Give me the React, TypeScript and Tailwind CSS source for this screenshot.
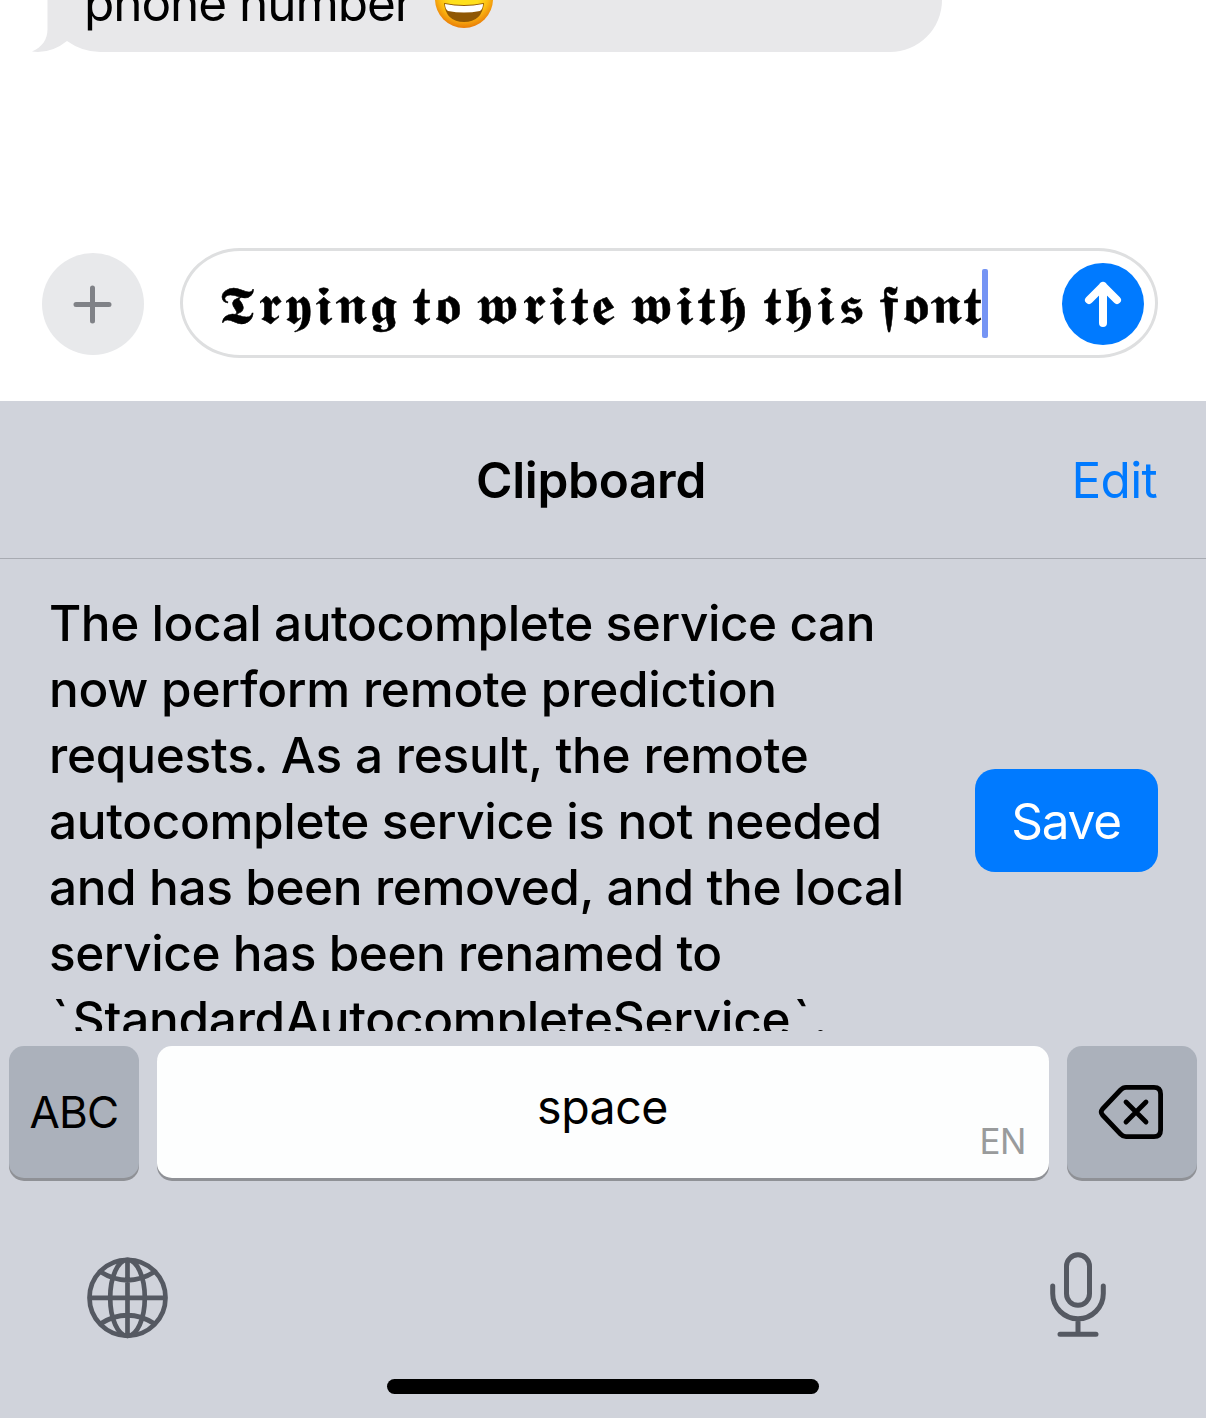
const lines = [
  { text: "The local autocomplete service can", cls: "tracking-[-0.45px]" },
  { text: "now perform remote prediction", cls: "tracking-[-0.26px]" },
  { text: "requests. As a result, the remote", cls: "tracking-[-0.23px]" },
  { text: "autocomplete service is not needed", cls: "tracking-[-0.36px]" },
  { text: "and has been removed, and the local", cls: "tracking-[-0.4px]" },
  { text: "service has been renamed to", cls: "tracking-[-0.46px]" },
];

function Emoji() {
  return (
    <svg className="h-[60px] w-[60px]" viewBox="0 0 60 60">
      <defs>
        <radialGradient id="face" cx="0.5" cy="0.4" r="0.6">
          <stop offset="0.45" stopColor="#ffe01c" />
          <stop offset="0.72" stopColor="#fdbd12" />
          <stop offset="1" stopColor="#e97c08" />
        </radialGradient>
      </defs>
      <circle cx="30" cy="30" r="29" fill="url(#face)" />
      <path d="M10 34 Q30 38 50 34 Q48 53 30 53 Q12 53 10 34Z" fill="#8f5704" />
      <path d="M11 35 Q30 39 49 35 Q49 40 46 42 Q30 45 14 42 Q11 40 11 35Z" fill="#fff" />
    </svg>
  );
}

function Message() {
  return (
    <div className="relative ml-[48px] h-[52px] w-[894px] overflow-visible rounded-br-[53px] bg-[#e8e8ea]">
      <svg className="absolute top-0 -left-[18px] h-[53px] w-[80px]" viewBox="30 0 80 53">
        <rect x="47" y="30" width="60" height="23" fill="#fff" />
        <path d="M47.500 0V29C47.500 40 42 47 32 51.600Q51 54 67 41Q82 51.800 100 52H110V0Z" fill="#e8e8ea" />
      </svg>
      <div className="absolute inset-0 overflow-hidden">
        <div className="-mt-[31px] ml-[36px] flex h-[60px] items-center">
          <span className="mt-[8px] w-[350px] text-[49.5px] leading-[60px] tracking-[-1.05px] whitespace-nowrap">phone number</span>
          <span className="h-[60px] w-[60px] shrink-0"><Emoji /></span>
        </div>
      </div>
    </div>
  );
}

function Composer() {
  return (
    <div className="mt-[196px] flex h-[110px] items-center pr-[48px] pl-[42px]">
      <button className="mt-[2px] flex h-[102px] w-[102px] items-center justify-center rounded-full bg-[#e8e9eb]">
        <svg className="h-[42px] w-[42px]" viewBox="0 0 42 42" stroke="#808287" strokeWidth="5" strokeLinecap="round">
          <path d="M4 21.500H37M20.500 5V38" />
        </svg>
      </button>
      <div className="ml-[36px] flex h-[110px] w-[978px] items-center rounded-[60px/55px] border-[3px] border-[#dedfe0] pt-[2px] pr-[11px] pl-[35px]">
        <div className="w-[764px] shrink-0">
          <span className="mt-[3px] inline-block origin-left scale-x-[1.12] text-[53px] leading-[60px] tracking-[2.900px] [word-spacing:-5px] whitespace-nowrap [-webkit-text-stroke:0.5px_black] [font-family:'Liberation_Serif',serif]">
            𝕿𝖗𝖞𝖎𝖓𝖌 𝖙𝖔 𝖜𝖗𝖎𝖙𝖊 𝖜𝖎𝖙𝖍 𝖙𝖍𝖎𝖘 <span className="-ml-[2px] tracking-[1.900px]">𝖋𝖔𝖓𝖙</span>
          </span>
        </div>
        <span className="-mt-[2px] h-[69px] w-[6px] shrink-0 rounded-[2px] bg-[#7594f4]" />
        <button className="ml-auto flex h-[82px] w-[82px] shrink-0 items-center justify-center rounded-full bg-[#007aff]">
          <svg className="h-[82px] w-[82px]" viewBox="0 0 82 82" fill="none" stroke="#fff" strokeWidth="8" strokeLinecap="round" strokeLinejoin="round">
            <path d="M41 60V23M27 37L41 23L55 37" />
          </svg>
        </button>
      </div>
    </div>
  );
}

const key = "flex h-[132px] items-center justify-center rounded-[15px] shadow-[0_3px_0_#8f9196]";

export default function App() {
  return (
    <div className="flex h-[1418px] w-[1206px] flex-col overflow-hidden bg-white text-black [font-family:Inter,sans-serif]">
      <Message />
      <Composer />
      <div className="mt-[43px] flex flex-1 flex-col bg-[#d0d3db]">
        <header className="grid h-[158px] grid-cols-[1fr_auto_1fr] items-center border-b border-[#a8abb2] pt-[2px] pr-[49px] pl-[25px]">
          <span />
          <h1 className="text-[49.5px] font-semibold tracking-[-0.3px]">Clipboard</h1>
          <button className="justify-self-end text-[49.5px] tracking-[-0.7px] text-[#007aff]">Edit</button>
        </header>
        <section className="flex h-[472px] items-start justify-between overflow-hidden pr-[48px] pl-[49px]">
          <div className="pt-[31px] text-[49.5px] leading-[66px] font-[450] whitespace-nowrap">
            {lines.map((l) => (
              <p key={l.text} className={"h-[66px] " + l.cls}>{l.text}</p>
            ))}
            <p className="h-[66px] pl-[3px] tracking-[-0.28px]">
              <span className="tracking-[4px]">`</span>StandardAutocompleteService<span className="ml-[3px] tracking-[3px]">`</span>.
            </p>
          </div>
          <button className="mt-[210px] h-[103px] w-[183px] rounded-[20px] bg-[#007aff] pt-[2px] pr-[1px] text-[49.5px] tracking-[-1.2px] text-white">Save</button>
        </section>
        <div className="mt-[15px] flex gap-[18px] px-[9px]">
          <button className={key + " w-[130px] bg-[#abb1bb] text-[44px] tracking-[-0.8px]"}>ABC</button>
          <button className={key + " relative w-[892px] bg-[#fdfefe] pr-[1px] pb-[9px] text-[46.5px] tracking-[-0.5px]"}>
            space
            <span className="absolute right-[23px] bottom-[15px] text-[35px] leading-[44px] tracking-[-0.5px] text-[#999b9c]">EN</span>
          </button>
          <button className={key + " w-[130px] bg-[#abb1bb] pr-[2px]"}>
            <svg className="h-[54px] w-[66px]" viewBox="1098 1085 66 54" fill="none" stroke="#000" strokeWidth="4.800" strokeLinecap="round" strokeLinejoin="round">
              <path d="M1126 1087.400H1154Q1160.600 1087.400 1160.600 1094V1130Q1160.600 1136.600 1154 1136.600H1126Q1123 1136.600 1120.500 1134L1102.500 1115Q1100 1112 1102.500 1109L1120.500 1090Q1123 1087.400 1126 1087.400Z" />
              <path d="M1126 1102L1146 1122M1146 1102L1126 1122" />
            </svg>
          </button>
        </div>
        <div className="mt-[70px] flex h-[92px] justify-between pr-[96px] pl-[84px]">
          <svg className="h-[92px] w-[88px]" viewBox="84 1248 88 92" fill="none" stroke="#555962" strokeWidth="4.700">
            <circle cx="127.500" cy="1297.800" r="38" />
            <ellipse cx="127.500" cy="1297.800" rx="17.300" ry="38" />
            <path d="M127.500 1260V1336M89 1297.800H166M100 1271.500Q127.500 1289 155 1271.500M100 1324Q127.500 1306.500 155 1324" />
          </svg>
          <svg className="h-[92px] w-[64px]" viewBox="1046 1248 64 92" fill="none" stroke="#555962" strokeWidth="5" strokeLinecap="round">
            <rect x="1066.500" y="1254.800" width="23" height="50.500" rx="11.500" />
            <path d="M1052.700 1286V1293.500A25.300 25.300 0 0 0 1103.300 1293.500V1286M1078 1319V1334M1060 1334.300H1096" />
          </svg>
        </div>
        <div className="mx-auto mt-[39px] h-[15px] w-[432px] rounded-full bg-black" />
      </div>
    </div>
  );
}
